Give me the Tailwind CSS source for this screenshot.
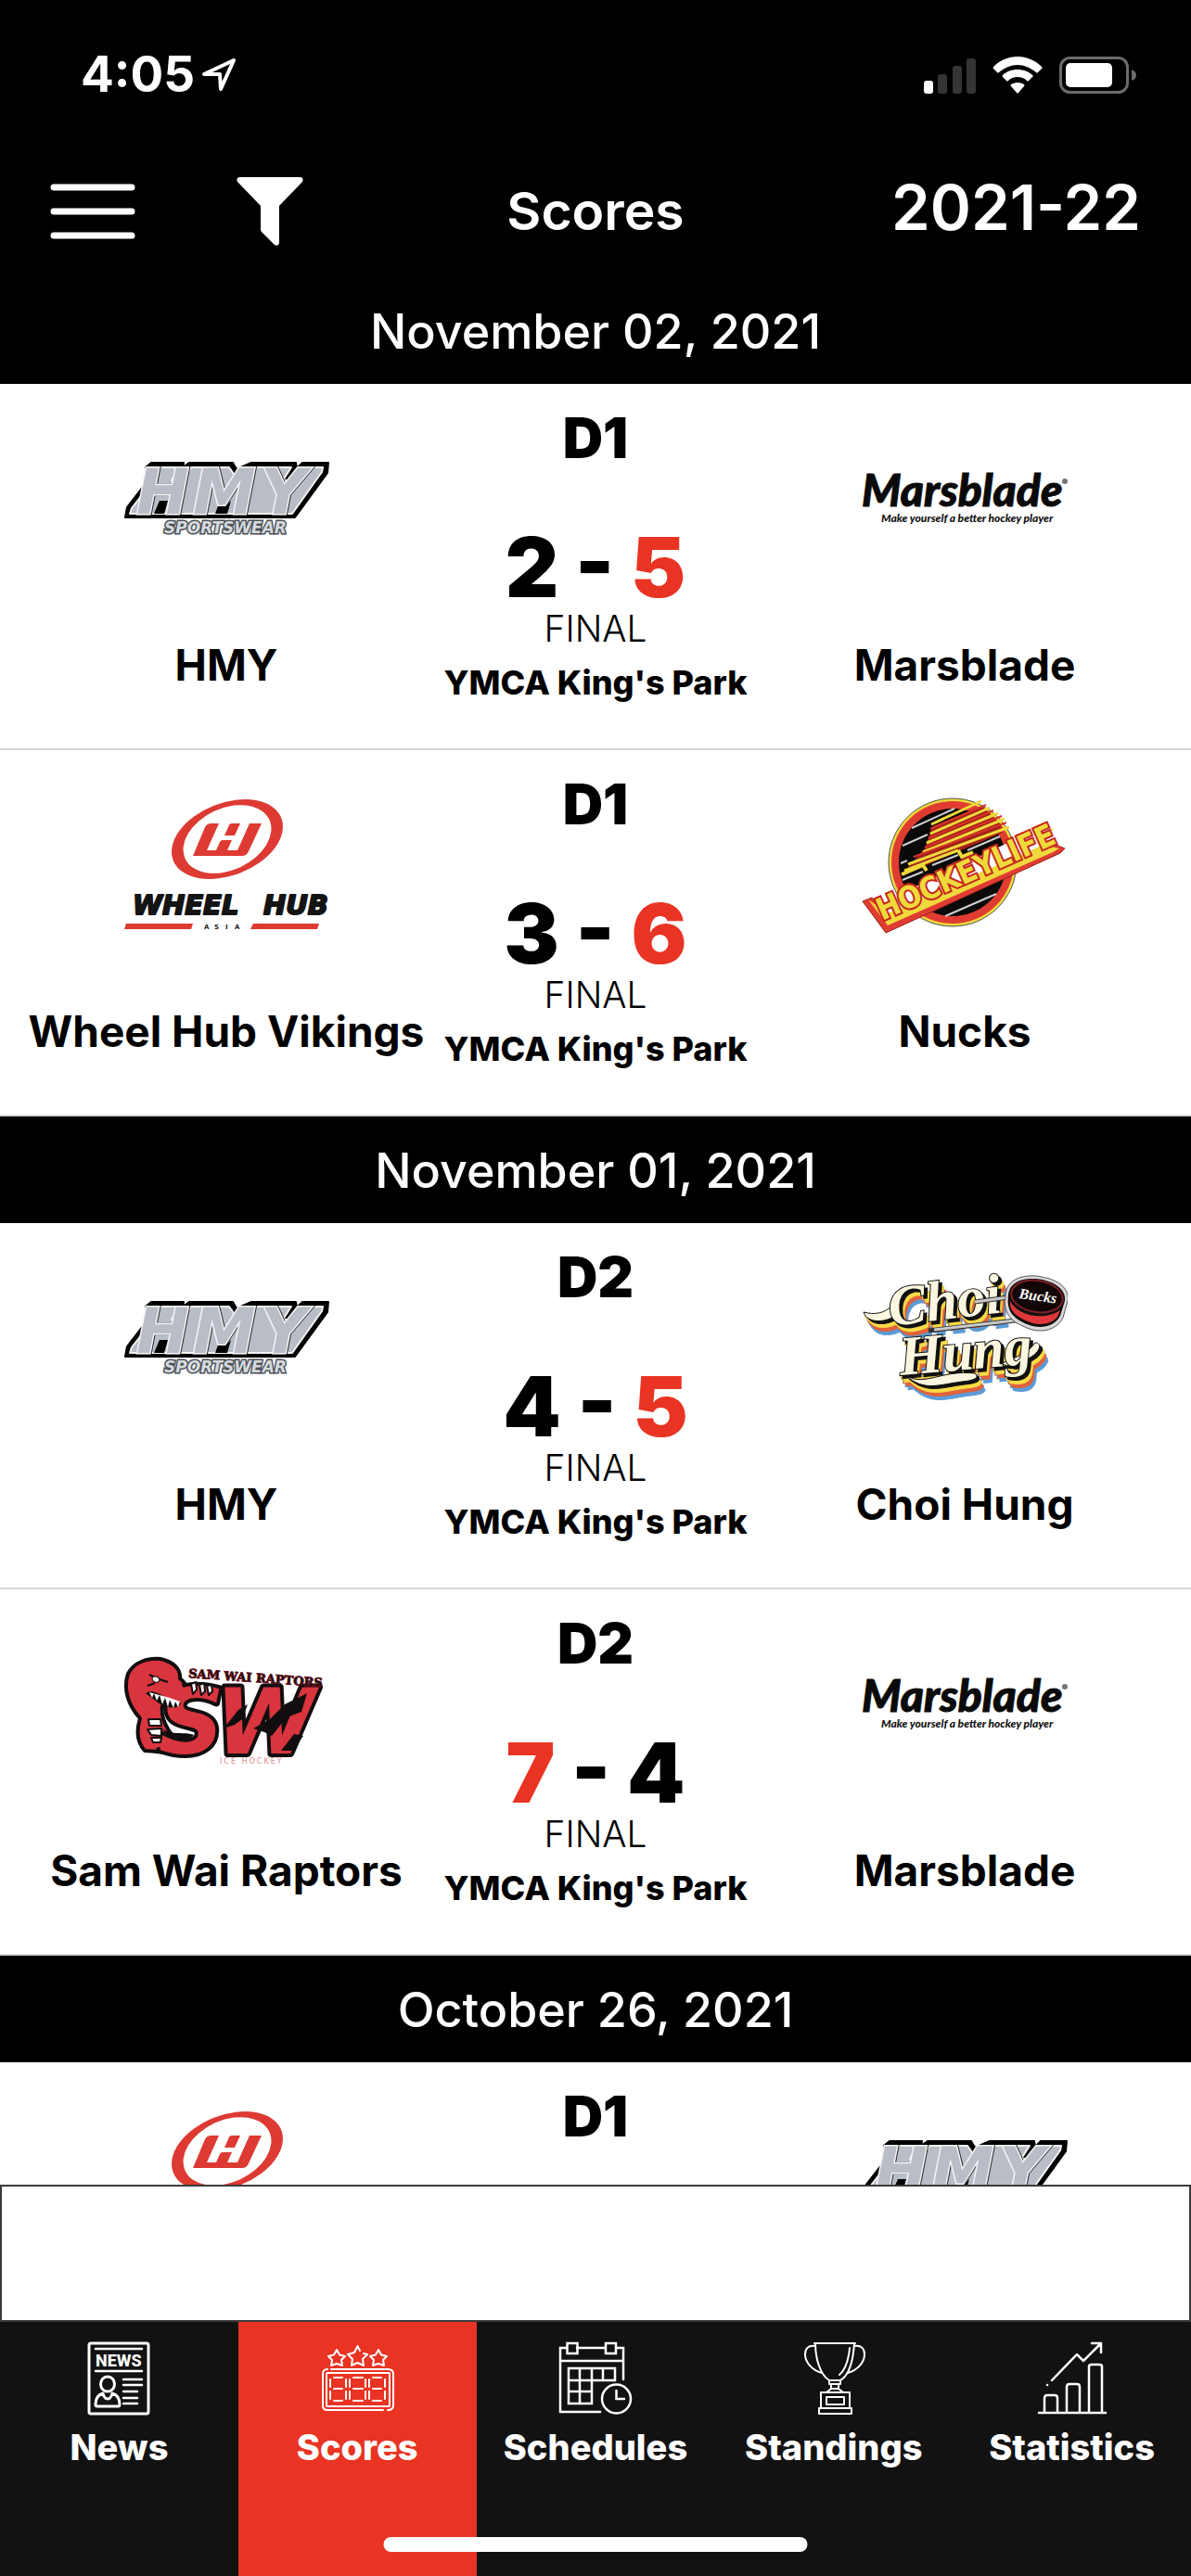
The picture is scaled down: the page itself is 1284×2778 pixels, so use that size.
<!DOCTYPE html>
<html lang="en">
<head>
  <meta charset="UTF-8">
  <title>Scores</title>
  <meta name="viewport" content="width=device-width, initial-scale=1.0">
  <!-- Tailwind CSS CDN -->
  <script src="https://cdn.jsdelivr.net/npm/@tailwindcss/browser@4"></script>
</head>
<body class="relative h-screen flex flex-col bg-black text-black font-['Inter',sans-serif] overflow-hidden">
  <!-- Team logos -->
  <svg class="hidden" aria-hidden="true">
    <symbol id="logo-hmy" viewBox="0 0 222 222">
      <path d="M2 128 4 117 31 82 24 74 30 69H65L64 74 71 69H118L122 76 138 69H186L187 75 193 69H221L220 80 185 128Z" fill="#000" stroke="#000" stroke-width="2" stroke-linejoin="round"/>
      <path d="M7 124 9 118 37 82 32 74H60L52 88H64L73 74H114L121 84 140 74H181L172 88H184L196 74H215L214 79 182 124Z" fill="#b9bdc6" stroke="#f4f4f6" stroke-width="2" stroke-linejoin="round"/>
      <path d="M33 124 39 110H48L44 124ZM99 124 104 110 110 116 116 110 112 124Z" fill="#000"/>
      <text x="14 75 148" y="124" font-size="68" class="font-['DejaVu_Sans'] font-bold italic [filter:drop-shadow(1px_0_0_#222)]" fill="#b9bdc6" stroke="#f4f4f6" stroke-width="3" paint-order="stroke">HMY</text>
      <text x="44" y="145" font-size="17" class="font-['DejaVu_Sans'] font-bold italic" fill="#d5dade" stroke="#4b5157" stroke-width="3" paint-order="stroke">SPORTSWEAR</text>
    </symbol>
    <symbol id="logo-marsblade" viewBox="0 0 222 222">
      <text x="0" y="116" font-size="48" class="font-['Lato'] font-black italic" fill="#0a0a0a" stroke="#0a0a0a" stroke-width="1">Marsblade</text>
      <circle cx="219" cy="89" r="3" fill="#777"/>
      <text x="21" y="133" font-size="12" class="font-['Lato'] font-black italic" fill="#111">Make yourself a better hockey player</text>
    </symbol>
    <symbol id="logo-wheelhub" viewBox="0 0 222 222">
      <ellipse cx="112" cy="80" rx="62.6" ry="39" transform="rotate(-21.5 112 80)" fill="#dc3a33"/>
      <ellipse cx="112" cy="80" rx="50" ry="33.3" transform="rotate(-25 112 80)" fill="#fff"/>
      <path d="M95 63H103L90 92H100L104 83Q105 81 107 81H117L112 92H123L136 63H149L135 93Q133 98 128 98H75L88 67Q90 63 95 63ZM117 63H126L120 76H109L113 67Q114 63 117 63Z" fill="#dc3a33"/>
      <text y="161" font-size="29" class="font-['DejaVu_Sans'] font-bold italic" fill="#141414" stroke="#141414" stroke-width="2" stroke-linejoin="round"><tspan x="10">WHEEL</tspan><tspan x="151">HUB</tspan></text>
      <path d="M1 177 3 171H75L73 177ZM137 177 140 171H211L209 177Z" fill="#dc3a33"/>
      <text x="87 98 110 120" y="177" font-size="7" class="font-['DejaVu_Sans'] font-bold" fill="#222">ASIA</text>
    </symbol>
    <symbol id="logo-nucks" viewBox="0 0 222 222">
      <circle cx="98" cy="105" r="69" fill="#f0d93a" stroke="#555" stroke-width="1"/>
      <circle cx="98" cy="105" r="66" fill="#e03c31"/>
      <circle cx="98" cy="105" r="58" fill="#0a0a0a"/>
      <!-- white scratches -->
      <path d="M54 68 100 47M44 87 71 75M42 106 49 103M44 124 66 115M76 108 104 97M114 92 149 77M90 163 145 139" stroke="#cfcfcf" stroke-width="2"/>
      <!-- speed lines -->
      <path d="M72 69 125 42M76 66 130 44 148 62 152 73 60 112 50 110 68 90Z" fill="#a32117"/>
      <path d="M75 64 129 39M74 74 138 46M70 84 147 52M66 94 154 58M50 107 159 67M46 114 104 92" stroke="#f0d93a" stroke-width="3"/>
      <path d="M74 69 134 43M72 79 142 49M68 89 151 55M56 99 156 62" stroke="#d8332a" stroke-width="2"/>
      <path d="M43 118 66 108 70 114M104 92 108 99 120 94" stroke="#f0d93a" stroke-width="4" fill="none"/>
      <!-- banner -->
      <path d="M0 147 20 139 26 146 187 70 192 80 205 83 219 90 213 95 25 181Z" fill="#fff"/>
      <path d="M1 147 11 143 28 167 196 90 207 85 219 90 214 95 26 181Z" fill="#e03c31" stroke="#9b2019" stroke-width="1"/>
      <path d="M7 145 28 173 206 94 213 90 196 86 28 160Z" fill="#f0d93a"/>
      <path d="M194 75 206 69" stroke="#f0d93a" stroke-width="2"/>
      <text x="22" y="168" transform="rotate(-24 22 168)" font-size="33" class="font-['DejaVu_Sans_Condensed','DejaVu_Sans'] font-bold" fill="#f0d93a" stroke="#c5271e" stroke-width="4" paint-order="stroke">HOCKEYLIFE</text>
    </symbol>
    <symbol id="logo-choihung" viewBox="0 0 222 222">
      <g class="[filter:drop-shadow(3px_3px_0_#111)_drop-shadow(2px_4px_0_#f8da45)_drop-shadow(2px_4px_0_#e0623c)_drop-shadow(2px_4px_0_#5a9bd8)]">
        <path d="M2 80C14 83 24 82 34 72L36 84C24 92 6 92 2 80Z" fill="#fbf6df" stroke="#111"/>
        <path d="M48 149C70 160 86 142 122 146 128 151 120 154 108 155 84 158 68 166 48 149Z" fill="#fbf6df" stroke="#111"/>
        <path d="M150 136C164 128 176 128 187 113 193 113 194 119 186 126 176 134 166 133 158 138Z" fill="#fbf6df" stroke="#111"/>
        <text x="31" y="95" font-size="61" transform="rotate(-7 31 95)" class="font-['Liberation_Serif'] font-bold italic" fill="#fbf6df" stroke="#111" stroke-width="2" paint-order="stroke">Choi</text>
        <text x="42" y="148" font-size="60" transform="rotate(-5 42 148)" class="font-['Liberation_Serif'] font-bold italic" fill="#fbf6df" stroke="#111" stroke-width="2" paint-order="stroke">Hung</text>
      </g>
      <path d="M122 69 158 64M72 100 174 88" stroke="#333" stroke-width="5"/>
      <path d="M122 69 158 64M78 99 174 88" stroke="#c9c9c9" stroke-width="3"/>
      <path d="M155 62C156 46 170 40 188 41 212 44 224 54 222 68L217 86C210 100 192 104 176 96 160 90 152 80 155 62Z" fill="#d9d9d9" stroke="#555" stroke-width="1"/>
      <path d="M158 62C159 48 172 43 188 44 208 46 221 56 219 68L214 84C208 96 192 99 178 93 162 86 156 78 158 62Z" fill="#151010"/>
      <path d="M160 68C168 84 196 90 214 78L211 85C204 94 190 95 179 90 166 85 159 78 160 68Z" fill="#e0383a"/>
      <ellipse cx="189" cy="63" rx="28" ry="17" transform="rotate(9 189 63)" fill="#120606" stroke="#7a2028" stroke-width="2"/>
      <text x="169" y="65" font-size="16" transform="rotate(8 169 65)" class="font-['Liberation_Serif'] font-bold italic" fill="#fff">Bucks</text>
    </symbol>
    <symbol id="logo-raptors" viewBox="0 0 222 222">
      <path d="M23 158C14 148 14 136 18 123 4 108 0 90 5 75 12 62 26 58 40 59 54 62 62 70 61 80 70 88 72 94 69 102 64 112 54 113 42 110 40 122 48 140 62 150L70 160C54 164 40 158 23 158Z" fill="#d9353f" stroke="#120d0e" stroke-width="4" stroke-linejoin="round"/>
      <text y="161" class="font-['DejaVu_Sans'] font-bold italic" fill="#d9353f" stroke="#120d0e" stroke-width="8" stroke-linejoin="round" paint-order="stroke"><tspan x="38" font-size="98">S</tspan><tspan x="99" font-size="98">W</tspan></text>
      <!-- dark rips across the letters -->
      <path d="M108 134 124 114 134 108 128 124 120 130ZM140 134 158 124 174 108 198 96 192 116 176 122 160 142 152 138ZM42 134C52 142 66 137 76 141 72 148 50 148 42 134ZM170 158 184 140 194 142 182 158Z" fill="#120d0e"/>
      <path d="M9 74C14 64 28 61 40 62 53 65 59 73 58 82 66 89 68 95 66 100 62 108 52 108 42 104 34 100 26 98 24 96 22 104 34 112 38 114 34 126 36 140 46 152 38 156 30 154 26 154 18 146 18 134 21 122 10 112 2 92 9 74Z" fill="#d9353f"/>
      <!-- face -->
      <path d="M28 76 36 80 48 84M26 88 34 85" stroke="#120d0e" stroke-width="2" fill="none"/>
      <ellipse cx="35" cy="81" rx="4" ry="3" transform="rotate(25 35 81)" fill="#fff" stroke="#120d0e"/>
      <path d="M24 96C34 90 40 100 62 106 60 114 48 112 40 108Z" fill="#120d0e"/>
      <path d="M28 95 31 101 33 96 36 104 39 98 42 108 45 101 48 111 50 103 54 112 56 105 59 111 61 105 50 101Z" fill="#fff"/>
      <!-- claws -->
      <path d="M73 86 78 84 79 92 75 97ZM82 87 87 85 88 94 84 98ZM90 88 95 87 96 94 92 98ZM27 124 40 124 41 131 28 131ZM26 135 41 134 41 142 30 141ZM30 144 41 144 40 149 32 149Z" fill="#fff" stroke="#120d0e" stroke-width="2" stroke-linejoin="round"/>
      <text x="70" y="79" font-size="13" transform="rotate(4 70 79)" class="font-['DejaVu_Serif'] font-bold" fill="#120d0e" stroke="#5d1019" stroke-width="1">SAM WAI RAPTORS</text>
      <text x="104" y="172" font-size="8" class="font-['DejaVu_Sans'] tracking-[2px]" fill="#e08a8f">ICE HOCKEY</text>
    </symbol>
  </svg>

  <!-- Header -->
  <header class="bg-black text-white">
    <!-- Status bar -->
    <div class="h-[156px] pt-1.5 pl-[87px] pr-[58px] flex items-center justify-between">
      <div class="flex items-center gap-2">
        <span class="text-[53px] font-bold">4:05</span>
        <svg class="w-9 h-9" viewBox="0 0 36 36" fill="none" stroke="#fff" stroke-width="4" stroke-linejoin="round"><path d="M2 17 34 2 20 33 19 17Z"/></svg>
      </div>
      <div class="flex items-center gap-[18px]">
        <svg class="w-14 h-10" viewBox="0 0 56 40">
          <rect y="26" width="10" height="14" rx="3" fill="#fff"/>
          <rect x="15" y="19" width="10" height="21" rx="3" fill="#353535"/>
          <rect x="31" y="10" width="10" height="30" rx="3" fill="#353535"/>
          <rect x="46" y="2" width="10" height="38" rx="3" fill="#353535"/>
        </svg>
        <svg class="w-[54px] h-10" viewBox="0 0 54 40" fill="#fff">
          <path d="M27 0C37 0 46 4 53 11 54 12 54 12 53 13L49 17Q48 18 47 17C41 12 34 9 27 9S13 12 7 17Q6 18 5 17L1 13Q0 12 1 11C8 4 17 0 27 0Z"/>
          <path d="M27 14C33 14 39 16 43 20 44 21 44 21 43 22L39 26Q38 27 37 26C34 23 31 22 27 22S20 23 17 26Q16 27 15 26L11 22Q10 21 11 20C15 16 21 14 27 14Z"/>
          <path d="M27 28C30 28 32 29 34 30Q35 31 34 32L28 39Q27 40 26 39L20 32Q19 31 20 30C22 29 24 28 27 28Z"/>
        </svg>
        <svg class="w-[84px] h-10" viewBox="0 0 84 40">
          <rect x="1.5" y="1.5" width="72" height="37" rx="10" fill="none" stroke="#6b6b6b" stroke-width="3"/>
          <rect x="7" y="7" width="50" height="26" rx="5" fill="#fff"/>
          <path d="M78 14Q83 16 83 20T78 26Z" fill="#6b6b6b"/>
        </svg>
      </div>
    </div>

    <!-- Toolbar -->
    <div class="h-[143px] px-[54px] grid grid-cols-[1fr_auto_1fr] items-center">
      <div class="flex items-center gap-[109px]">
        <button type="button" aria-label="Menu">
          <svg class="w-[92px] h-[60px]" viewBox="0 0 92 60" stroke="#fff" stroke-width="7" stroke-linecap="round"><path d="M4 4H88M4 30H88M4 56H88"/></svg>
        </button>
        <button type="button" aria-label="Filter">
          <svg class="w-[72px] h-[74px]" viewBox="0 0 72 74" fill="#fff"><path d="M3 0H69Q73 1 71 5L46 31V71Q45 75 41 73L27 59Q26 58 26 56V31L1 5Q-1 1 3 0Z"/></svg>
        </button>
      </div>
      <h1 class="text-[57px] leading-[68px] font-semibold">Scores</h1>
      <button type="button" class="justify-self-end text-[67px] leading-[80px] font-semibold -mt-2">2021-22</button>
    </div>
  </header>

  <!-- Games -->
  <main class="flex-1 min-h-0 overflow-hidden bg-white">
    <section>
      <h2 class="bg-black text-white h-[115px] pt-0.5 flex items-center justify-center text-[52px] font-medium">November 02, 2021</h2>

      <article class="grid grid-cols-[minmax(0,19fr)_minmax(0,12fr)_minmax(0,19fr)] pb-[49px] border-b-2 border-[#d6d6d6] whitespace-nowrap">
        <div class="pt-4 flex flex-col items-center">
          <svg class="w-[222px] h-[222px]" role="img" aria-label="HMY logo"><use href="#logo-hmy"/></svg>
          <p class="mt-[38px] text-[46px] leading-[54px] font-bold">HMY</p>
        </div>
        <div class="pt-6 flex flex-col items-center">
          <p class="text-[60px] leading-[68px] font-black">D1</p>
          <p class="mt-[62px] text-[89px] leading-[88px] font-black">2 - <span class="text-[#e93323]">5</span></p>
          <p class="text-[39px] leading-[44px] font-light">FINAL</p>
          <p class="mt-3.5 text-[36px] leading-[44px] font-extrabold">YMCA King's Park</p>
        </div>
        <div class="pt-4 flex flex-col items-center">
          <svg class="w-[222px] h-[222px]" role="img" aria-label="Marsblade logo"><use href="#logo-marsblade"/></svg>
          <p class="mt-[38px] text-[46px] leading-[54px] font-bold">Marsblade</p>
        </div>
      </article>

      <article class="grid grid-cols-[minmax(0,19fr)_minmax(0,12fr)_minmax(0,19fr)] pb-[49px] border-b-2 border-[#d6d6d6] whitespace-nowrap">
        <div class="pt-4 flex flex-col items-center">
          <svg class="w-[222px] h-[222px]" role="img" aria-label="Wheel Hub logo"><use href="#logo-wheelhub"/></svg>
          <p class="mt-[38px] text-[46px] leading-[54px] font-bold">Wheel Hub Vikings</p>
        </div>
        <div class="pt-6 flex flex-col items-center">
          <p class="text-[60px] leading-[68px] font-black">D1</p>
          <p class="mt-[62px] text-[89px] leading-[88px] font-black">3 - <span class="text-[#e93323]">6</span></p>
          <p class="text-[39px] leading-[44px] font-light">FINAL</p>
          <p class="mt-3.5 text-[36px] leading-[44px] font-extrabold">YMCA King's Park</p>
        </div>
        <div class="pt-4 flex flex-col items-center">
          <svg class="w-[222px] h-[222px]" role="img" aria-label="Nucks logo"><use href="#logo-nucks"/></svg>
          <p class="mt-[38px] text-[46px] leading-[54px] font-bold">Nucks</p>
        </div>
      </article>
    </section>

    <section>
      <h2 class="bg-black text-white h-[115px] pt-0.5 flex items-center justify-center text-[52px] font-medium">November 01, 2021</h2>

      <article class="grid grid-cols-[minmax(0,19fr)_minmax(0,12fr)_minmax(0,19fr)] pb-[49px] border-b-2 border-[#d6d6d6] whitespace-nowrap">
        <div class="pt-4 flex flex-col items-center">
          <svg class="w-[222px] h-[222px]" role="img" aria-label="HMY logo"><use href="#logo-hmy"/></svg>
          <p class="mt-[38px] text-[46px] leading-[54px] font-bold">HMY</p>
        </div>
        <div class="pt-6 flex flex-col items-center">
          <p class="text-[60px] leading-[68px] font-black">D2</p>
          <p class="mt-[62px] text-[89px] leading-[88px] font-black">4 - <span class="text-[#e93323]">5</span></p>
          <p class="text-[39px] leading-[44px] font-light">FINAL</p>
          <p class="mt-3.5 text-[36px] leading-[44px] font-extrabold">YMCA King's Park</p>
        </div>
        <div class="pt-4 flex flex-col items-center">
          <svg class="w-[222px] h-[222px]" role="img" aria-label="Choi Hung logo"><use href="#logo-choihung"/></svg>
          <p class="mt-[38px] text-[46px] leading-[54px] font-bold">Choi Hung</p>
        </div>
      </article>

      <article class="grid grid-cols-[minmax(0,19fr)_minmax(0,12fr)_minmax(0,19fr)] pb-[49px] border-b-2 border-[#d6d6d6] whitespace-nowrap">
        <div class="pt-4 flex flex-col items-center">
          <svg class="w-[222px] h-[222px]" role="img" aria-label="Sam Wai Raptors logo"><use href="#logo-raptors"/></svg>
          <p class="mt-[38px] text-[46px] leading-[54px] font-bold">Sam Wai Raptors</p>
        </div>
        <div class="pt-6 flex flex-col items-center">
          <p class="text-[60px] leading-[68px] font-black">D2</p>
          <p class="mt-[62px] text-[89px] leading-[88px] font-black"><span class="text-[#e93323]">7</span> - 4</p>
          <p class="text-[39px] leading-[44px] font-light">FINAL</p>
          <p class="mt-3.5 text-[36px] leading-[44px] font-extrabold">YMCA King's Park</p>
        </div>
        <div class="pt-4 flex flex-col items-center">
          <svg class="w-[222px] h-[222px]" role="img" aria-label="Marsblade logo"><use href="#logo-marsblade"/></svg>
          <p class="mt-[38px] text-[46px] leading-[54px] font-bold">Marsblade</p>
        </div>
      </article>
    </section>

    <section>
      <h2 class="bg-black text-white h-[115px] pt-0.5 flex items-center justify-center text-[52px] font-medium">October 26, 2021</h2>

      <article class="grid grid-cols-[minmax(0,19fr)_minmax(0,12fr)_minmax(0,19fr)] whitespace-nowrap">
        <div class="pt-4 flex flex-col items-center">
          <svg class="w-[222px] h-[222px]" role="img" aria-label="Wheel Hub logo"><use href="#logo-wheelhub"/></svg>
        </div>
        <div class="pt-6 flex flex-col items-center">
          <p class="text-[60px] leading-[68px] font-black">D1</p>
        </div>
        <div class="pt-4 flex flex-col items-center">
          <svg class="w-[222px] h-[222px]" role="img" aria-label="HMY logo"><use href="#logo-hmy"/></svg>
        </div>
      </article>
    </section>
  </main>

  <!-- Ad banner slot -->
  <aside class="h-[148px] shrink-0 bg-white border-2 border-[#3a3a3a]"></aside>

  <!-- Tab bar -->
  <nav class="grid grid-cols-5 shrink-0 bg-[#121212] text-white text-[38px] leading-[44px] font-extrabold">
    <a href="#news" class="pt-[21px] pb-[117px] flex flex-col items-center gap-3">
      <svg class="w-20 h-20" viewBox="0 0 80 80" fill="none" stroke="#fff" stroke-width="3" stroke-linecap="round">
        <rect x="8" y="2" width="64" height="76" rx="2" stroke-width="3"/>
        <path d="M15 8H65M15 32H65M45 41H65M45 47H65M45 54H60M45 61H60M45 67H60" stroke-width="2.5"/>
        <ellipse cx="28" cy="46" rx="7.5" ry="8"/>
        <path d="M23 56C16 58 15 64 15 68Q15 70 17 70H39Q41 70 41 68C41 64 40 58 33 56 31 64 25 64 23 56Z" stroke-linejoin="round"/>
        <text x="15" y="27" font-size="18" class="font-['Roboto']" fill="#fff" stroke="none">NEWS</text>
      </svg>
      News
    </a>
    <a href="#scores" class="bg-[#e93323] pt-[21px] pb-[117px] flex flex-col items-center gap-3" aria-current="page">
      <svg class="w-20 h-20" viewBox="0 0 80 80" fill="none" stroke="#fff" stroke-width="2" stroke-linecap="round" stroke-linejoin="round">
        <path d="M18 9 21 14.500 27 16 23 20 24 26 18 24 12 26 13 20 9 16 15 14.500ZM63 9 66 14.500 72 16 68 20 69 26 63 24 57 26 58 20 54 16 60 14.500Z"/>
        <path d="M43 10 40.500 5 37 12 30 14 35 19 34 26 40.500 23 47 26 46 19 51 14 47 13"/>
        <path d="M8 30Q3 30 3 35V69Q3 74 8 74H68M12 30H73Q79 30 79 35V69Q79 74 73 74"/>
        <rect x="7" y="34" width="68" height="36" rx="1"/>
        <path d="M15 39H24M15 51H24M15 64H24M11 41V49M11 54V62M28 41V49M28 54V62M36 39H46M36 51H46M36 64H46M32 41V49M32 54V62M49 41V49M49 54V62M57 39H66M57 51H66M57 64H66M53 41V49M53 54V62M70 41V49M70 54V62"/>
      </svg>
      Scores
    </a>
    <a href="#schedules" class="pt-[21px] pb-[117px] flex flex-col items-center gap-3">
      <svg class="w-20 h-20" viewBox="0 0 80 80" fill="none" stroke="#fff" stroke-width="2.500" stroke-linecap="round">
        <path d="M9 7H2V76H45M20 7H50M62 7H70V41M2 21H70"/>
        <rect x="9.500" y="2" width="11" height="11"/>
        <rect x="51" y="2" width="11" height="11"/>
        <path d="M11 29H61V42H11ZM11 42V67H36V29M23 29V67M48 29V42M11 54H36"/>
        <circle cx="62.500" cy="62" r="15.500"/>
        <path d="M62.500 53V62H71"/>
      </svg>
      Schedules
    </a>
    <a href="#standings" class="pt-[21px] pb-[117px] flex flex-col items-center gap-3">
      <svg class="w-20 h-20" viewBox="0 0 80 80" fill="none" stroke="#fff" stroke-width="2" stroke-linejoin="round" stroke-linecap="round">
        <path d="M19 2H63M20 2C20 18 25 36 35 42H47C57 36 61 18 62 2"/>
        <path d="M20 5C12 4 9 8 9 14 9 22 16 31 27 34M62 5C70 4 73 8 73 14 73 22 66 31 55 34M57 7C56 18 53 30 46 36"/>
        <path d="M35 42V46H47V42M37 46V51L32 55H50L45 51V46M37 51H45"/>
        <rect x="26" y="55" width="31" height="17"/>
        <rect x="32" y="60" width="19" height="8"/>
        <rect x="24" y="72" width="35" height="6"/>
      </svg>
      Standings
    </a>
    <a href="#statistics" class="pt-[21px] pb-[117px] flex flex-col items-center gap-3">
      <svg class="w-20 h-20" viewBox="0 0 80 80" fill="none" stroke="#fff" stroke-width="2.500" stroke-linecap="round" stroke-linejoin="round">
        <path d="M4 77H76M10 77V61Q10 58 13 58H21Q24 58 24 61V77M34 77V49Q34 46 37 46H45Q48 46 48 49V77M58 77V27Q58 25 61 25H69Q72 25 72 27V77"/>
        <path d="M18 42 45 14 52 21 71 2M61 2H71V12M13 47H13.100"/>
      </svg>
      Statistics
    </a>
  </nav>

  <!-- Home indicator -->
  <div class="absolute bottom-[26px] left-1/2 -translate-x-1/2 w-[457px] h-4 rounded-full bg-white"></div>
</body>
</html>
